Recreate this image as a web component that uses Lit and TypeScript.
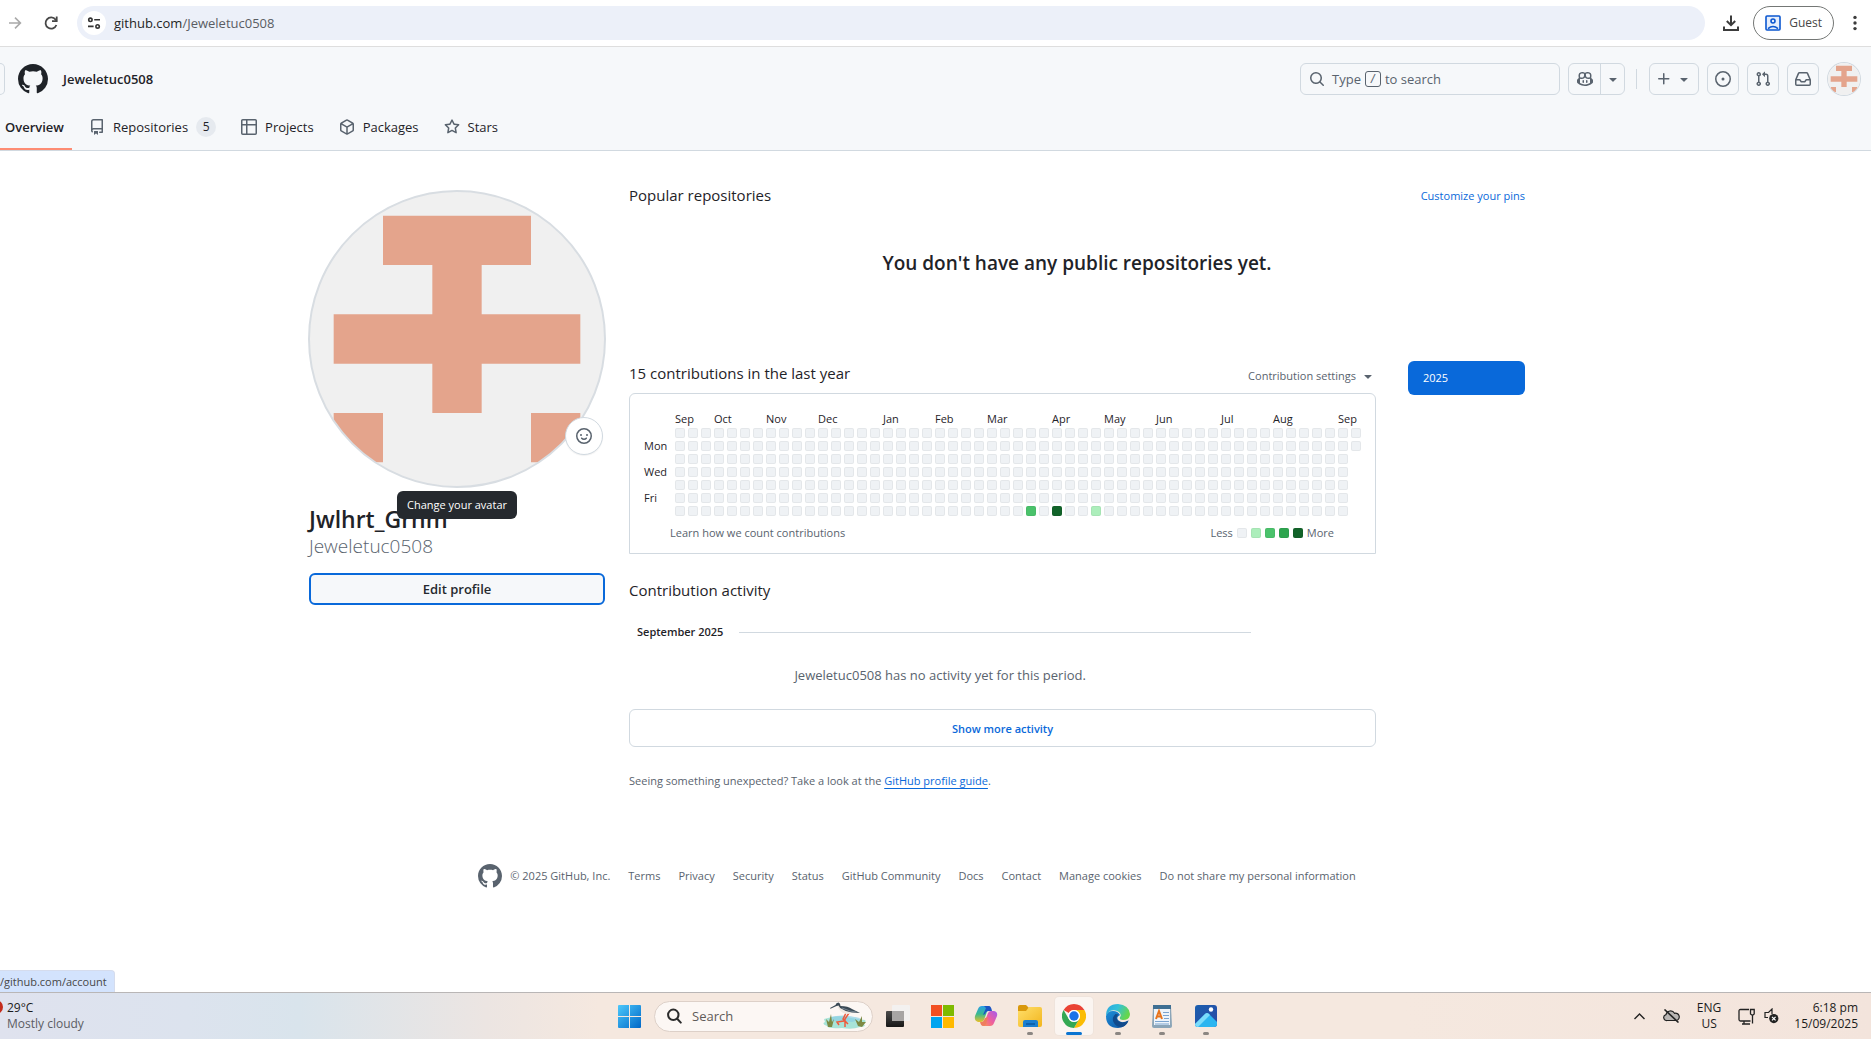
import { LitElement, html, svg, css, nothing } from "lit";
import { customElement } from "lit/decorators.js";
import { classMap } from "lit/directives/class-map.js";

const octicons: Record<string, string> = {
  mark: "M8 0c4.42 0 8 3.58 8 8a8.013 8.013 0 0 1-5.45 7.59c-.4.08-.55-.17-.55-.38 0-.27.01-1.13.01-2.2 0-.75-.25-1.23-.54-1.48 1.78-.2 3.65-.88 3.65-3.95 0-.88-.31-1.59-.82-2.15.08-.2.36-1.02-.08-2.12 0 0-.67-.22-2.2.82-.64-.18-1.32-.27-2-.27-.68 0-1.36.09-2 .27-1.53-1.03-2.2-.82-2.2-.82-.44 1.1-.16 1.92-.08 2.12-.51.56-.82 1.28-.82 2.15 0 3.06 1.86 3.75 3.64 3.95-.23.2-.44.55-.51 1.07-.46.21-1.61.55-2.33-.66-.15-.24-.6-.83-1.23-.82-.67.01-.27.38.01.53.34.19.73.9.82 1.13.16.45.68 1.31 2.69.94 0 .67.01 1.3.01 1.49 0 .21-.15.45-.55.38A7.995 7.995 0 0 1 0 8c0-4.42 3.58-8 8-8Z",
  repo: "M2 2.5A2.5 2.5 0 0 1 4.5 0h8.75a.75.75 0 0 1 .75.75v12.5a.75.75 0 0 1-.75.75h-2.5a.75.75 0 0 1 0-1.5h1.75v-2h-8a1 1 0 0 0-.714 1.7.75.75 0 1 1-1.072 1.05A2.495 2.495 0 0 1 2 11.5Zm10.5-1h-8a1 1 0 0 0-1 1v6.708A2.486 2.486 0 0 1 4.5 9h8ZM5 12.25a.25.25 0 0 1 .25-.25h3.5a.25.25 0 0 1 .25.25v3.25a.25.25 0 0 1-.4.2l-1.45-1.087a.249.249 0 0 0-.3 0L5.4 15.7a.25.25 0 0 1-.4-.2Z",
  table: "M0 1.75C0 .784.784 0 1.75 0h12.5C15.216 0 16 .784 16 1.75v12.5A1.75 1.75 0 0 1 14.25 16H1.75A1.75 1.75 0 0 1 0 14.25ZM6.5 6.5v8h7.75a.25.25 0 0 0 .25-.25V6.5Zm8-1.5V1.75a.25.25 0 0 0-.25-.25H6.5V5Zm-13 1.5v7.75c0 .138.112.25.25.25H5v-8ZM5 5V1.5H1.75a.25.25 0 0 0-.25.25V5Z",
  package: "m8.878.392 5.25 3.045c.54.314.872.89.872 1.514v6.098a1.75 1.75 0 0 1-.872 1.514l-5.25 3.045a1.75 1.75 0 0 1-1.756 0l-5.25-3.045A1.75 1.75 0 0 1 1 11.049V4.951c0-.624.332-1.201.872-1.514L7.122.392a1.75 1.75 0 0 1 1.756 0ZM7.875 1.69l-4.63 2.685L8 7.133l4.755-2.758-4.63-2.685a.248.248 0 0 0-.25 0ZM2.5 5.677v5.372c0 .09.047.171.125.216l4.625 2.683V8.432Zm6.25 8.271 4.625-2.683a.25.25 0 0 0 .125-.216V5.677L8.75 8.432Z",
  star: "M8 .25a.75.75 0 0 1 .673.418l1.882 3.815 4.21.612a.75.75 0 0 1 .416 1.279l-3.046 2.97.719 4.192a.751.751 0 0 1-1.088.791L8 12.347l-3.766 1.98a.75.75 0 0 1-1.088-.79l.72-4.194L.818 6.374a.75.75 0 0 1 .416-1.28l4.21-.611L7.327.668A.75.75 0 0 1 8 .25Zm0 2.445L6.615 5.5a.75.75 0 0 1-.564.41l-3.097.45 2.24 2.184a.75.75 0 0 1 .216.664l-.528 3.084 2.769-1.456a.75.75 0 0 1 .698 0l2.77 1.456-.53-3.084a.75.75 0 0 1 .216-.664l2.24-2.183-3.096-.45a.75.75 0 0 1-.564-.41L8 2.694Z",
  search: "M10.68 11.74a6 6 0 0 1-7.922-8.982 6 6 0 0 1 8.982 7.922l3.04 3.04a.749.749 0 0 1-.326 1.275.749.749 0 0 1-.734-.215ZM11.5 7a4.499 4.499 0 1 0-8.997 0A4.499 4.499 0 0 0 11.5 7Z",
  copilot: "M7.998 15.035c-4.562 0-7.873-2.914-7.998-3.749V9.338c.085-.628.677-1.686 1.588-2.065.013-.07.024-.143.036-.218.029-.183.06-.384.126-.612-.201-.508-.254-1.084-.254-1.656 0-.87.128-1.769.693-2.484.579-.733 1.494-1.124 2.724-1.261 1.206-.134 2.262.034 2.944.765.05.053.096.108.139.165.044-.057.094-.112.143-.165.682-.731 1.738-.899 2.944-.765 1.23.137 2.145.528 2.724 1.261.566.715.693 1.614.693 2.484 0 .572-.053 1.148-.254 1.656.066.228.098.429.126.612.012.076.024.148.037.218.924.385 1.522 1.471 1.591 2.095v1.872c0 .766-3.351 3.795-8.002 3.795Zm0-1.485c2.28 0 4.584-1.11 5.002-1.433V7.862l-.023-.116c-.49.21-1.075.291-1.727.291-1.146 0-2.059-.327-2.71-.991A3.222 3.222 0 0 1 8 6.303a3.24 3.24 0 0 1-.544.743c-.65.664-1.563.991-2.71.991-.652 0-1.236-.081-1.727-.291l-.023.116v4.255c.419.323 2.722 1.433 5.002 1.433ZM6.762 2.83c-.193-.206-.637-.413-1.682-.297-1.019.113-1.479.404-1.713.7-.247.312-.369.789-.369 1.554 0 .793.129 1.171.308 1.371.162.181.519.379 1.442.379.853 0 1.339-.235 1.638-.54.315-.322.527-.827.617-1.553.117-.935-.037-1.395-.241-1.614Zm4.155-.297c-1.044-.116-1.488.091-1.681.297-.204.219-.359.679-.242 1.614.091.726.303 1.231.618 1.553.299.305.784.54 1.638.54.922 0 1.28-.198 1.442-.379.179-.2.308-.578.308-1.371 0-.765-.123-1.242-.37-1.554-.233-.296-.693-.587-1.713-.7ZM6.25 9.037a.75.75 0 0 1 .75.75v1.501a.75.75 0 0 1-1.5 0V9.787a.75.75 0 0 1 .75-.75Zm4.25.75v1.501a.75.75 0 0 1-1.5 0V9.787a.75.75 0 0 1 1.5 0Z",
  plus: "M7.75 2a.75.75 0 0 1 .75.75V7h4.25a.75.75 0 0 1 0 1.5H8.5v4.25a.75.75 0 0 1-1.5 0V8.5H2.75a.75.75 0 0 1 0-1.5H7V2.75A.75.75 0 0 1 7.75 2Z",
  caret: "m4.427 7.427 3.396 3.396a.25.25 0 0 0 .354 0l3.396-3.396A.25.25 0 0 0 11.396 7H4.604a.25.25 0 0 0-.177.427Z",
  issue: "M8 9.5a1.5 1.5 0 1 0 0-3 1.5 1.5 0 0 0 0 3ZM8 0a8 8 0 1 1 0 16A8 8 0 0 1 8 0ZM1.5 8a6.5 6.5 0 1 0 13 0 6.5 6.5 0 0 0-13 0Z",
  pull: "M1.5 3.25a2.25 2.25 0 1 1 3 2.122v5.256a2.251 2.251 0 1 1-1.5 0V5.372A2.25 2.25 0 0 1 1.5 3.25Zm5.677-.177L9.573.677A.25.25 0 0 1 10 .854V2.5h1A2.5 2.5 0 0 1 13.5 5v5.628a2.251 2.251 0 1 1-1.5 0V5a1 1 0 0 0-1-1h-1v1.646a.25.25 0 0 1-.427.177L7.177 3.427a.25.25 0 0 1 0-.354ZM3.75 2.5a.75.75 0 1 0 0 1.5.75.75 0 0 0 0-1.5Zm0 9.5a.75.75 0 1 0 0 1.5.75.75 0 0 0 0-1.5Zm8.25.75a.75.75 0 1 0 1.5 0 .75.75 0 0 0-1.5 0Z",
  inbox: "M2.8 2.06A1.75 1.75 0 0 1 4.41 1h7.18c.7 0 1.333.417 1.61 1.06l2.74 6.395c.04.093.06.194.06.295v4.5A1.75 1.75 0 0 1 14.25 15H1.75A1.75 1.75 0 0 1 0 13.25v-4.5c0-.101.02-.202.06-.295Zm1.61.44a.25.25 0 0 0-.23.152L1.887 8H4.75a.75.75 0 0 1 .6.3L6.625 10h2.75l1.275-1.7a.75.75 0 0 1 .6-.3h2.863L11.82 2.652a.25.25 0 0 0-.23-.152Zm10.09 7h-2.875l-1.275 1.7a.75.75 0 0 1-.6.3h-3.5a.75.75 0 0 1-.6-.3L4.375 9.5H1.5v3.75c0 .138.112.25.25.25h12.5a.25.25 0 0 0 .25-.25Z",
};

const icon = (name: string, size = 16) => html`
  <svg class="icon" width=${size} height=${size} viewBox="0 0 16 16" aria-hidden="true">
    <path fill="currentColor" fill-rule="evenodd" d=${octicons[name]}></path>
  </svg>`;

const smiley = html`
  <svg class="icon" width="16" height="16" viewBox="0 0 16 16" fill="none" stroke="currentColor" stroke-width="1.5" stroke-linecap="round" aria-hidden="true">
    <circle cx="8" cy="8" r="7.25"></circle>
    <path d="M5.7 10.2Q6.5 11.2 8 11.2T10.3 10.2"></path>
    <circle cx="5" cy="7" r="1" fill="currentColor" stroke="none"></circle>
    <circle cx="11" cy="7" r="1" fill="currentColor" stroke="none"></circle>
  </svg>`;

// One path holds every filled cell, so no seams show between neighbours.
const identiconRows = [".###.", "..#..", "#####", "..#..", "#...#"];
const identiconPath = identiconRows
  .map((row, y) =>
    [...row.matchAll(/#+/g)]
      .map((m) => `M${35 + m.index! * 70} ${35 + y * 70}h${m[0].length * 70}v70h${-m[0].length * 70}z`)
      .join("")
  )
  .join("");

const identicon = html`
  <svg class="identicon" viewBox="0 0 420 420" role="img" aria-label="Jeweletuc0508">
    <rect width="420" height="420" fill="#f0f0f0"></rect>
    ${svg`<path d=${identiconPath} fill="#e4a48c"></path>`}
  </svg>`;

const months: [string, number][] = [
  ["Sep", 3], ["Oct", 4], ["Nov", 4], ["Dec", 5], ["Jan", 4], ["Feb", 4], ["Mar", 5],
  ["Apr", 4], ["May", 4], ["Jun", 5], ["Jul", 4], ["Aug", 5], ["Sep", 2],
];
const weekdays = ["", "Mon", "", "Wed", "", "Fri", ""];
const weekCount = 53;
const levels: Record<string, number> = { "6-27": 2, "6-29": 4, "6-32": 1 };

const footerLinks = [
  "Terms", "Privacy", "Security", "Status", "GitHub Community", "Docs", "Contact",
  "Manage cookies", "Do not share my personal information",
];

const shared = css`
  * { box-sizing: border-box; }
  button, input { font: inherit; color: inherit; margin: 0; padding: 0; border: 0; background: none; }
  a { color: inherit; text-decoration: none; }
  h1, h2, h3, p, ul { margin: 0; padding: 0; font-weight: 400; font-size: inherit; }
  ul { list-style: none; }
  svg { display: block; flex: none; }
  .identicon { width: 100%; height: 100%; }
`;

@customElement("browser-bar")
export class BrowserBar extends LitElement {
  static styles = [shared, css`
    :host { display: block; }
    .bar { display: flex; align-items: center; height: 47px; padding: 0 9px 1px 7px; border-bottom: 1px solid #dedede; background: #fff; color: #474747; }
    .forward { color: #a9a9a9; margin-right: 19px; }
    .reload { margin-right: 17px; }
    .address { flex: 1; display: flex; align-items: center; height: 34px; padding-left: 5px; border-radius: 17px; background: #ecf0f9; }
    .site { display: grid; place-items: center; width: 24px; height: 24px; margin-right: 8px; border-radius: 50%; background: #fff; }
    .host { color: #1f1f1f; font-size: 13px; }
    .path { flex: 1; min-width: 0; font-size: 13px; color: #5a5d63; outline: none; }
    .download { margin: 0 13px 0 17px; }
    .guest { display: flex; align-items: center; gap: 8px; height: 34px; padding: 0 11px; border: 1px solid #747775; border-radius: 17px; font-size: 12px; }
    .more { margin-left: 14px; }
  `];
  render() {
    return html`
      <nav class="bar" aria-label="Browser">
        <button class="forward" aria-label="Forward">
          <svg width="16" height="16" viewBox="0 0 16 16" fill="none" stroke="currentColor" stroke-width="1.6"><path d="M2 8h11M8 2.6 13.4 8 8 13.4"></path></svg>
        </button>
        <button class="reload" aria-label="Reload">
          <svg width="18" height="18" viewBox="0 0 18 18" fill="none" stroke="currentColor" stroke-width="1.8"><path d="M14.4 11A5.6 5.6 0 1 1 13.6 5.6L14.6 7"></path><path d="M14.7 2.6V7.2H10"></path></svg>
        </button>
        <div class="address">
          <button class="site" aria-label="View site information">
            <svg width="14" height="14" viewBox="0 0 14 14" fill="none" stroke="#333" stroke-width="1.6"><circle cx="3.4" cy="3.8" r="1.7"></circle><path d="M7.2 3.8H13M1 10.4H6.6"></path><circle cx="10.6" cy="10.4" r="1.7"></circle></svg>
          </button>
          <label class="host" for="url">github.com</label>
          <input class="path" id="url" type="text" value="/Jeweletuc0508" />
        </div>
        <button class="download" aria-label="Downloads">
          <svg width="18" height="18" viewBox="0 0 18 18" fill="none" stroke="#3c3c3c" stroke-width="2"><path d="M9 1.5V11M4.8 7 9 11.2 13.2 7M2 12.5V16H16V12.5"></path></svg>
        </button>
        <button class="guest">
          <svg width="16" height="16" viewBox="0 0 16 16" fill="none" stroke="#0b57d0" stroke-width="1.6"><rect x="1" y="1" width="14" height="14" rx="1" fill="#e6eefc"></rect><circle cx="8" cy="6" r="2"></circle><path d="M3 13.6Q8 9.4 13 13.6"></path></svg>
          Guest
        </button>
        <button class="more" aria-label="Menu">
          <svg width="14" height="18" viewBox="0 0 14 18" fill="#3c3c3c"><circle cx="7" cy="3.4" r="1.7"></circle><circle cx="7" cy="9" r="1.7"></circle><circle cx="7" cy="14.6" r="1.7"></circle></svg>
        </button>
      </nav>`;
  }
}

@customElement("site-header")
export class SiteHeader extends LitElement {
  static styles = [shared, css`
    :host { display: block; background: #f6f8fa; border-bottom: 1px solid #d1d9e0; }
    .top { display: flex; align-items: center; padding: 15px 11px 15px 0; height: 63px; color: #59636e; }
    .menu { width: 5px; height: 32px; border: 1px solid #d1d9e0; border-left: 0; border-radius: 0 6px 6px 0; margin-right: 13px; }
    .logo { color: #1f2328; margin-right: 15px; }
    .owner { color: #1f2328; font-size: 13px; font-weight: 600; margin-right: auto; }
    .search { display: flex; align-items: center; width: 260px; height: 32px; padding: 0 8px; border: 1px solid #d1d9e0; border-radius: 6px; font-size: 13px; }
    .search .icon { margin-right: 7px; }
    .key { display: grid; place-items: center; width: 16px; height: 16px; margin: 0 4px; border: 1px solid #59636e; border-radius: 3px; font-size: 11px; line-height: 14px; }
    .split { display: flex; height: 32px; margin-left: 8px; border: 1px solid #d1d9e0; border-radius: 6px; }
    .split button { display: grid; place-items: center; width: 31px; }
    .split .drop { width: 24px; border-left: 1px solid #d1d9e0; }
    .rule { width: 1px; height: 20px; margin: 0 12px 0 11px; background: #d1d9e0; }
    .tools { display: flex; align-items: center; gap: 8px; }
    .tool { display: flex; align-items: center; justify-content: center; width: 32px; height: 32px; border: 1px solid #d1d9e0; border-radius: 6px; }
    .create { width: 50px; gap: 4px; }
    .user { width: 32px; height: 32px; border-radius: 50%; overflow: hidden; box-shadow: 0 0 0 1px #d1d9e0; margin-left: 1px; }
    .tabs { display: flex; height: 40px; align-items: stretch; font-size: 13px; color: #1f2328; }
    .tab { display: flex; align-items: center; gap: 8px; padding: 0 8px 4px; margin-right: 9px; border-bottom: 2px solid transparent; }
    .tab .icon { color: #59636e; }
    .current { font-weight: 600; padding-left: 5px; border-color: #fd8c73; }
    .count { min-width: 20px; height: 20px; border-radius: 10px; background: #e6eaef; font-size: 12px; line-height: 20px; text-align: center; }
  `];
  render() {
    const tabs: [string, string, string?][] = [
      ["repo", "Repositories", "5"], ["table", "Projects"], ["package", "Packages"], ["star", "Stars"],
    ];
    return html`
      <header>
        <div class="top">
          <button class="menu" aria-label="Open menu"></button>
          <a class="logo" href="#" aria-label="Homepage">${icon("mark", 30)}</a>
          <a class="owner" href="#">Jeweletuc0508</a>
          <button class="search">${icon("search")}Type <kbd class="key">/</kbd> to search</button>
          <div class="split">
            <button aria-label="Chat with Copilot">${icon("copilot")}</button>
            <button class="drop" aria-label="Open Copilot menu">${icon("caret")}</button>
          </div>
          <span class="rule"></span>
          <div class="tools">
            <button class="tool create" aria-label="Create new">${icon("plus")}${icon("caret")}</button>
            <a class="tool" href="#" aria-label="Issues">${icon("issue")}</a>
            <a class="tool" href="#" aria-label="Pull requests">${icon("pull")}</a>
            <a class="tool" href="#" aria-label="Notifications">${icon("inbox")}</a>
            <button class="user" aria-label="User menu">${identicon}</button>
          </div>
        </div>
        <nav class="tabs" aria-label="User profile">
          <a class="tab current" href="#" aria-current="page">Overview</a>
          ${tabs.map(([i, label, n]) => html`
            <a class="tab" href="#">${icon(i)}<span>${label}</span>${n ? html`<span class="count">${n}</span>` : nothing}</a>`)}
        </nav>
      </header>`;
  }
}

@customElement("profile-card")
export class ProfileCard extends LitElement {
  static styles = [shared, css`
    :host { display: block; }
    .photo { position: relative; margin-bottom: 17px; }
    .avatar { display: block; aspect-ratio: 1; border-radius: 50%; overflow: hidden; outline: 2px solid #d8dde2; outline-offset: -1px; }
    .status { position: absolute; right: 2px; bottom: 32px; display: grid; place-items: center; width: 38px; height: 38px; border: 1px solid #d1d9e0; border-radius: 50%; background: #fff; color: #59636e; box-shadow: 0 1px 1px rgba(31, 35, 40, .06); }
    .tip { position: absolute; top: calc(100% + 4px); left: 50%; transform: translateX(-50%); padding: 4px 10px; border-radius: 6px; background: #25292e; color: #fff; font-size: 11px; line-height: 20px; white-space: nowrap; }
    .name { font-size: 23px; line-height: 30px; font-weight: 600; color: #1f2328; }
    .login { font-size: 19px; line-height: 24px; font-weight: 300; color: #59636e; }
    .edit { width: 100%; height: 32px; margin-top: 15px; border: 2px solid #0969da; border-radius: 6px; background: #f6f8fa; color: #25292e; font-size: 13px; font-weight: 600; }
  `];
  render() {
    return html`
      <div class="photo">
        <a class="avatar" href="#">${identicon}</a>
        <button class="status" aria-label="Set status">${smiley}</button>
        <span class="tip" role="tooltip">Change your avatar</span>
      </div>
      <h1>
        <div class="name">Jwlhrt_Grhm</div>
        <div class="login">Jeweletuc0508</div>
      </h1>
      <button class="edit">Edit profile</button>`;
  }
}

@customElement("contribution-calendar")
export class ContributionCalendar extends LitElement {
  static styles = [shared, css`
    :host { display: block; border: 1px solid #d1d9e0; border-radius: 6px 6px 0 0; padding: 15px 11px 11px; font-size: 11px; color: #1f2328; }
    .grid { border-collapse: separate; border-spacing: 3px; table-layout: fixed; width: max-content; }
    .label-col { width: 28px; }
    .week-col { width: 10px; }
    .grid th, .grid td { padding: 0; font-weight: 400; text-align: left; white-space: nowrap; }
    .month { height: 13px; line-height: 13px; }
    .weekday { height: 10px; line-height: 10px; }
    .day { width: 10px; height: 10px; border-radius: 2px; box-shadow: inset 0 0 0 1px rgba(31, 35, 40, .05); background: #eff2f5; }
    .l1 { background: #aceebb; }
    .l2 { background: #4ac26b; }
    .l3 { background: #2da44e; }
    .l4 { background: #116329; }
    .foot { display: flex; justify-content: space-between; padding: 5px 30px 0 29px; line-height: 18px; color: #59636e; }
    .legend { display: flex; align-items: center; gap: 4px; }
  `];
  render() {
    return html`
      <table class="grid" aria-label="Contribution graph">
        <colgroup>
          <col class="label-col" />
          ${Array.from({ length: weekCount }, () => html`<col class="week-col" />`)}
        </colgroup>
        <thead>
          <tr><td class="month"></td>${months.map(([m, span]) => html`<th class="month" colspan=${span} scope="colgroup">${m}</th>`)}</tr>
        </thead>
        <tbody>
          ${weekdays.map((label, d) => html`
            <tr>
              <th class="weekday" scope="row">${label}</th>
              ${Array.from({ length: d < 2 ? weekCount : weekCount - 1 }, (_, w) => {
                const level = levels[`${d}-${w}`] ?? 0;
                return html`<td class=${classMap({ day: true, [`l${level}`]: true })}></td>`;
              })}
            </tr>`)}
        </tbody>
      </table>
      <div class="foot">
        <a href="#">Learn how we count contributions</a>
        <div class="legend">Less
          ${[0, 1, 2, 3, 4].map((l) => html`<span class=${classMap({ day: true, [`l${l}`]: true })}></span>`)}
        More</div>
      </div>`;
  }
}

@customElement("task-bar")
export class TaskBar extends LitElement {
  static styles = [shared, css`
    :host { display: block; }
    .bar { display: grid; grid-template-columns: minmax(0, 1fr) auto minmax(0, 1fr); align-items: center; height: 47px; border-top: 1px solid #b9b6b6; font-size: 12px; line-height: 16px; color: #1b1b1b;
      background: linear-gradient(90deg, #dfe2ee 0, #dce3ee 10%, #d9e4ec 16%, #ece5e2 26%, #f5e8df 32%, #f5e8df 75%, #f3e4dc 100%); }
    .weather { display: flex; align-items: center; gap: 4px; text-align: left; }
    .weather .alert { align-self: flex-start; }
    .sky { color: #5b5d63; }
    .apps { display: flex; align-items: center; margin-right: 36px; }
    .search { display: flex; align-items: center; gap: 10px; width: 219px; height: 31px; margin: 0 6px; padding: 0 4px 0 12px; border: 1px solid #ddd0c8; border-radius: 16px; background: #fcf7f4; }
    .search input { flex: 1; min-width: 0; font-size: 13px; outline: none; }
    .search input::placeholder { color: #5f5b59; opacity: 1; }
    .app { position: relative; display: grid; place-items: center; width: 38px; height: 38px; margin-right: 6px; border-radius: 4px; }
    .app:last-child { margin-right: 0; }
    .start { margin-right: 0; }
    .active { background: #fbf5f1; box-shadow: 0 0 0 1px #efe4dc; }
    .running::after { content: ""; position: absolute; left: 16px; bottom: 0; width: 6px; height: 3px; border-radius: 2px; background: #8b8682; }
    .active::after { left: 11px; width: 16px; background: #0a74d1; }
    .tray { display: flex; align-items: center; justify-content: flex-end; padding-right: 13px; }
    .chevron { margin-right: 17px; }
    .lang { margin: 0 17px; text-align: center; }
    .net { margin-right: 9px; }
    .clock { margin-left: 15px; text-align: right; }
  `];
  render() {
    return html`
      <footer class="bar">
        <button class="weather">
          <svg class="alert" width="3" height="14" viewBox="0 0 3 14"><circle cx="-4" cy="7" r="7" fill="#c42b1c"></circle></svg>
          <span>29°C<br /><span class="sky">Mostly cloudy</span></span>
        </button>
        <div class="apps">
          <button class="app start" aria-label="Start">
            <svg width="23" height="23" viewBox="0 0 23 23"><defs><linearGradient id="win" x1="0" y1="0" x2="23" y2="23" gradientUnits="userSpaceOnUse"><stop offset="0" stop-color="#4cc8fb"></stop><stop offset="1" stop-color="#0067c7"></stop></linearGradient></defs><path fill="url(#win)" d="M1 0H11V11H0V1Q0 0 1 0ZM12 0H22Q23 0 23 1V11H12ZM0 12H11V23H1Q0 23 0 22ZM12 12H23V22Q23 23 22 23H12Z"></path></svg>
          </button>
          <label class="search">
            <svg width="15" height="16" viewBox="0 0 15 16" fill="none" stroke="#2b2b2b" stroke-width="2" stroke-linecap="round"><circle cx="6.3" cy="6.8" r="5.2"></circle><path d="m10.2 10.8 3.6 3.8"></path></svg>
            <input type="text" placeholder="Search" aria-label="Search" />
            <svg width="46" height="28" viewBox="0 0 46 28">
              <path fill="#a8e4d8" d="M2 17Q14 13 24 15T43 18Q45 20 41 22 46 24 38 25 30 28 20 26 6 27 5 24-1 22 3 20Z"></path>
              <path fill="#8bcfe6" d="M8 15Q24 11 40 17L30 20 10 19Z" opacity=".7"></path>
              <path fill="#7d8a45" d="M6 25 4 17 7 20 9 12 10 20 12 17 10 25ZM36 24 33 17 37 20 40 14 40 20 44 20 40 25Z"></path>
              <path fill="none" stroke="#ee5a3c" stroke-width="1.5" d="M24 11 21 17 26 22M27 11 23 17V25M22 19 15 20 17 23"></path>
              <path fill="#efe8e2" d="M15 3Q17 10 24 12 29 12 30 10L22 7Z"></path>
              <path fill="#3b4a56" d="M8 6 13.500 3Q14 .5 16.500.5 18.500 1 18.500 4 26 4 30 7L38 11 30 10.500Q24 10 20 7 17.500 6 16.500 3.500L14 4.200 8.500 6.800Z"></path>
              <path fill="none" stroke="#8796a3" stroke-width=".8" d="M20 6 28 9 34 10"></path>
            </svg>
          </label>
          <button class="app" aria-label="Task view">
            <svg width="24" height="22" viewBox="0 0 24 22"><defs><linearGradient id="tv" x1="0" y1="0" x2="0" y2="1"><stop offset="0" stop-color="#4b4b4b"></stop><stop offset="1" stop-color="#171717"></stop></linearGradient></defs><rect y="6" width="18" height="16" rx="1" fill="url(#tv)"></rect><rect x="6" width="18" height="16" rx="1" fill="#f3f1f0"></rect><rect x="6" y="6" width="12" height="10" fill="#a7a5a4"></rect></svg>
          </button>
          <button class="app" aria-label="Microsoft Store">
            <svg width="23" height="23" viewBox="0 0 23 23"><path fill="#f25022" d="M0 0H11V11H0Z"></path><path fill="#7fba00" d="M12 0H23V11H12Z"></path><path fill="#00a4ef" d="M0 12H11V23H0Z"></path><path fill="#ffb900" d="M12 12H23V23H12Z"></path></svg>
          </button>
          <button class="app" aria-label="Copilot">
            <svg width="24" height="22" viewBox="0 0 24 22"><defs>
              <linearGradient id="ca" x1="0" y1="0" x2="0" y2="1"><stop offset="0" stop-color="#2a9fe8"></stop><stop offset=".5" stop-color="#3aba8e"></stop><stop offset="1" stop-color="#e9c02a"></stop></linearGradient>
              <linearGradient id="cb" x1="1" y1="0" x2="0" y2="1"><stop offset="0" stop-color="#a35bf0"></stop><stop offset=".55" stop-color="#ef5f9c"></stop><stop offset="1" stop-color="#fb9552"></stop></linearGradient></defs>
              <path fill="url(#ca)" d="M8 1H15L10 15Q9 17 7 17H4Q0 16 1 11L4 4Q5 1 8 1Z"></path>
              <path fill="#1b55c4" d="M10 1H15Q17 1 18 6H15Q12 6 11 9L9 10 12 3Z"></path>
              <path fill="url(#cb)" d="M17 6H20Q24 7 23 11L20 18Q19 21 16 21H9L14 8Q15 6 17 6Z"></path>
              <path fill="#ef7d5e" d="M6 17H8Q10 16 11 13L14 12 12 19Q11 21 9 21 7 21 6 17Z"></path></svg>
          </button>
          <button class="app running" aria-label="File Explorer">
            <svg width="24" height="22" viewBox="0 0 24 22"><defs><linearGradient id="fo" x1="0" y1="0" x2="1" y2="1"><stop offset="0" stop-color="#ffdf6b"></stop><stop offset="1" stop-color="#f2b51d"></stop></linearGradient></defs><path fill="#d9980c" d="M0 2Q0 0 2 0H8L11 3V8H0Z"></path><path fill="url(#fo)" d="M0 6H8L11 2H22Q24 2 24 4V20Q24 22 22 22H2Q0 22 0 20Z"></path><path fill="#1a7fd0" d="M5 22V17Q5 15 7 15H18Q20 15 20 17V22Z"></path><path fill="#0d62ae" d="M8 18H17V20H8Z"></path></svg>
          </button>
          <button class="app running active" aria-label="Google Chrome">
            <svg width="24" height="24" viewBox="0 0 48 48"><path fill="#ea4335" d="M24 0A24 24 0 0 1 44.8 12H24A12 12 0 0 0 13.6 18L3.2 12A24 24 0 0 1 24 0Z"></path><path fill="#fbbc04" d="M44.8 12A24 24 0 0 1 24 48L34.4 30A12 12 0 0 0 34.4 18 12 12 0 0 0 24 12Z"></path><path fill="#34a853" d="M24 48A24 24 0 0 1 3.2 12L13.6 30A12 12 0 0 0 34.4 30Z"></path><circle cx="24" cy="24" r="12" fill="#fff"></circle><circle cx="24" cy="24" r="9.4" fill="#1a73e8"></circle></svg>
          </button>
          <button class="app running" aria-label="Microsoft Edge">
            <svg width="24" height="24" viewBox="0 0 24 24"><defs><linearGradient id="ea" x1="0" y1="0" x2="1" y2=".4"><stop offset="0" stop-color="#2aa5e0"></stop><stop offset=".5" stop-color="#34c1d8"></stop><stop offset="1" stop-color="#66d64b"></stop></linearGradient><linearGradient id="eb" x1="0" y1="0" x2="1" y2="1"><stop offset="0" stop-color="#1d8fd9"></stop><stop offset="1" stop-color="#0d4f9e"></stop></linearGradient></defs>
              <path fill="url(#eb)" d="M0 12Q1 7 7 7 12 7 14 11 10 13 12 16 15 20 22.500 16.500 19 24 12 24 0 24 0 12Z"></path>
              <path fill="#114a8b" d="M9.500 10Q5 14 8 19 11 24 17 22.800 21 21 22.500 16.500 17 20 12 17 9 13 12.500 10.500Z"></path>
              <path fill="url(#ea)" d="M0 12Q0 0 12 0 23 1 24 10 24 16 17 16 13 16 14 13 16 11 13 8 9 5 4 7 1 9 0 12Z"></path></svg>
          </button>
          <button class="app running" aria-label="WordPad">
            <svg width="20" height="23" viewBox="0 0 20 23"><path fill="#8ba5b8" d="M1 2H19L20 21Q20 23 18 23H2Q0 23 0 21Z"></path><path fill="#eef4fa" d="M2 4H18V20H2Z"></path><path fill="#3f6f93" d="M1 0H19V4H1Z"></path><path fill="none" stroke="#e8741c" stroke-width="2" d="m4 14 3-8 3 8M5 11.500H9"></path><path fill="none" stroke="#7ba4cf" d="M11 7.500H17M11 10.500H17M12 13.500H17M3 16.500H17M3 19H17"></path></svg>
          </button>
          <button class="app running" aria-label="Photos">
            <svg width="22" height="22" viewBox="0 0 22 22"><defs><linearGradient id="ph" x1="0" y1="0" x2="1" y2="1"><stop offset="0" stop-color="#1b5fae"></stop><stop offset="1" stop-color="#2a49a5"></stop></linearGradient><clipPath id="pc"><rect width="22" height="22" rx="3"></rect></clipPath></defs><g clip-path="url(#pc)"><rect width="22" height="22" fill="url(#ph)"></rect><path fill="#2cb5f0" d="M0 19 10 9Q12 7 14 9L22 17V22H0Z"></path><path fill="#7bdcfb" d="M0 19 10 9Q12 7 14 9L15 10 3 22H0Z"></path></g><circle cx="16" cy="4.500" r="2.200" fill="#fff"></circle></svg>
          </button>
        </div>
        <div class="tray">
          <button class="chevron" aria-label="Show hidden icons">
            <svg width="13" height="13" viewBox="0 0 13 13" fill="none" stroke="#222" stroke-width="1.400"><path d="m1.500 9 5-5 5 5"></path></svg>
          </button>
          <svg width="17" height="14" viewBox="0 0 17 14" role="img" aria-label="OneDrive"><path fill="#b9b5b3" stroke="#222" stroke-width="1.200" d="M4 11.500A3 3 0 0 1 3 5.600 4.600 4.600 0 0 1 11.500 4.300 3.600 3.600 0 0 1 13.500 11.500Z"></path><path stroke="#222" stroke-width="1.600" d="m1.500.5 14 13"></path></svg>
          <button class="lang">ENG<br />US</button>
          <svg class="net" width="17" height="17" viewBox="0 0 17 17" fill="none" stroke="#222" stroke-width="1.300" role="img" aria-label="Network"><path d="M11 1.500H2.500Q1 1.500 1 3V11.500Q1 13 2.500 13H12.500M6 13.500V16M4 16H12M14.500 7V15.500M12.500 1.500H16.200V6L14.500 7.500 12.500 6Z"></path></svg>
          <svg width="15" height="16" viewBox="0 0 15 16" role="img" aria-label="Muted"><path fill="none" stroke="#222" stroke-width="1.200" d="M8 6V1L4.500 4.500H1V9.500H4"></path><circle cx="9.800" cy="10.600" r="4.600" fill="#222"></circle><path stroke="#fff" stroke-width="1.200" d="m8 8.800 3.600 3.600m0-3.600L8 12.400"></path></svg>
          <button class="clock">6:18 pm<br />15/09/2025</button>
        </div>
      </footer>`;
  }
}

@customElement("app-root")
export class AppRoot extends LitElement {
  static styles = [shared, css`
    :host { display: flex; flex-direction: column; min-height: 100vh; background: #fff; color: #1f2328; font-family: "Open Sans", "Noto Sans", sans-serif; font-size: 13px; }
    .page { position: relative; flex: 1; padding-right: 37px; }
    .layout { display: grid; grid-template-columns: 296px minmax(0, 1fr); gap: 24px; max-width: 1216px; margin: 0 auto; padding-top: 32px; }
    profile-card { margin-top: 8px; }
    h2 { font-size: 15px; line-height: 24px; }
    .row { display: flex; justify-content: space-between; align-items: center; }
    .pins { color: #0969da; font-size: 11px; }
    .blank { padding: 40px 0 82px; text-align: center; font-size: 19px; line-height: 32px; font-weight: 600; }
    .contrib { display: grid; grid-template-columns: minmax(0, 1fr) 117px; gap: 32px; align-items: start; }
    .settings { display: flex; align-items: center; font-size: 11px; line-height: 18px; color: #59636e; gap: 4px; padding-top: 6px; }
    .heading { margin-bottom: 8px; }
    .year { display: block; padding: 8px 15px; border-radius: 6px; background: #0969da; color: #fff; font-size: 11px; line-height: 18px; }
    .activity { margin-top: 24px; }
    .month { display: flex; align-items: center; gap: 16px; margin: 20px 0 23px; padding-left: 8px; width: 83.3%; font-size: 11px; line-height: 20px; font-weight: 600; }
    .month::after { content: ""; flex: 1; height: 1px; background: #d1d9e0; }
    .none { width: 83.3%; text-align: center; color: #59636e; line-height: 20px; }
    .show { display: block; width: 100%; height: 38px; margin: 24px 0; border: 1px solid #d1d9e0; border-radius: 6px; color: #0969da; font-size: 11px; font-weight: 600; }
    .hint { font-size: 11px; line-height: 20px; color: #59636e; }
    .guide { color: #0969da; text-decoration: underline; text-underline-offset: 3px; }
    .footer { display: flex; justify-content: center; align-items: center; gap: 8px; padding: 73px 0 40px; font-size: 11px; line-height: 24px; color: #59636e; }
    .links { display: flex; gap: 18px; }
    .bubble { position: absolute; left: 0; bottom: 0; padding: 2px 7px 1px 0; border: 1px solid #d5dced; border-width: 1px 1px 0 0; border-radius: 0 4px 0 0; background: #d3e3fd; color: #474747; font-size: 11px; line-height: 18px; }
  `];
  render() {
    return html`
      <browser-bar></browser-bar>
      <site-header></site-header>
      <div class="page">
        <main class="layout">
          <profile-card></profile-card>
          <div>
            <div class="row"><h2>Popular repositories</h2><a class="pins" href="#">Customize your pins</a></div>
            <h3 class="blank">You don't have any public repositories yet.</h3>
            <div class="contrib">
              <div>
                <div class="row heading">
                  <h2>15 contributions in the last year</h2>
                  <button class="settings">Contribution settings ${icon("caret")}</button>
                </div>
                <contribution-calendar></contribution-calendar>
                <section class="activity">
                  <h2>Contribution activity</h2>
                  <h3 class="month">September 2025</h3>
                  <p class="none">Jeweletuc0508 has no activity yet for this period.</p>
                  <button class="show">Show more activity</button>
                  <p class="hint">Seeing something unexpected? Take a look at the <a class="guide" href="#">GitHub profile guide</a>.</p>
                </section>
              </div>
              <a class="year" href="#">2025</a>
            </div>
          </div>
        </main>
        <footer class="footer">
          ${icon("mark", 24)}
          <div class="links">
            <span>© 2025 GitHub, Inc.</span>
            ${footerLinks.map((l) => html`<a href="#">${l}</a>`)}
          </div>
        </footer>
        <div class="bubble">/github.com/account</div>
      </div>
      <task-bar></task-bar>`;
  }
}
